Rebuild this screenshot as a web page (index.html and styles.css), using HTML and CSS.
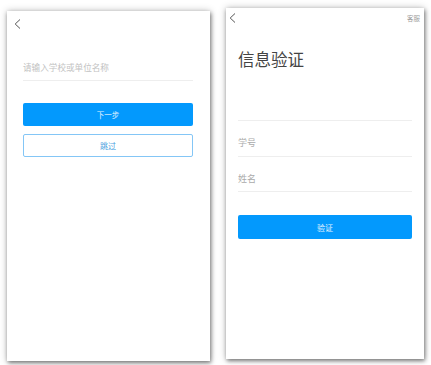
FILE: index.html
```html
<!DOCTYPE html>
<html lang="zh">
<head>
<meta charset="utf-8">
<link rel="stylesheet" href="styles.css">
</head>
<body>
<div class="stage">
  <div class="panel panel-left">
    <svg class="back back-left" viewBox="0 0 7 10" width="7" height="10"><path d="M6 0.5 L1.2 5 L6 9.5" fill="none" stroke="#555" stroke-width="1"/></svg>
    <div class="field-school">请输入学校或单位名称</div>
    <div class="btn btn-primary btn-next">下一步</div>
    <div class="btn btn-outline">跳过</div>
  </div>
  <div class="panel panel-right">
    <div class="header">
      <svg class="back" viewBox="0 0 7 10" width="7" height="10"><path d="M6 0.5 L1.2 5 L6 9.5" fill="none" stroke="#555" stroke-width="1"/></svg>
      <span class="service">客服</span>
    </div>
    <h1 class="title">信息验证</h1>
    <div class="blank"></div>
    <div class="field">学号</div>
    <div class="field field-name">姓名</div>
    <div class="btn btn-primary btn-verify">验证</div>
  </div>
</div>
</body>
</html>
```

FILE: styles.css
```css
* { box-sizing: border-box; }
html, body { margin: 0; padding: 0; background: #fff; }
body {
  width: 431px;
  height: 365px;
  overflow: hidden;
  font-family: "Noto Sans CJK SC", "Noto Sans", sans-serif;
}
.stage {
  display: flex;
  align-items: flex-start;
  padding-left: 7px;
}
.panel {
  background: #fff;
  box-shadow: 1px 2px 4px rgba(0, 0, 0, 0.45), 0 0 7px rgba(0, 0, 0, 0.25);
}
.panel-left {
  margin-top: 11px;
  width: 203px;
  height: 350px;
  padding: 0 17px 0 16px;
}
.panel-right {
  margin-top: 8px;
  margin-left: 16px;
  width: 198px;
  height: 351px;
  padding: 0 12px;
}
.back { display: block; }
.back-left {
  margin: 8px 0 0 -9px;
}
.field-school {
  margin-top: 25px;
  height: 27px;
  line-height: 26px;
  font-size: 8.6px;
  color: #c2c2c2;
  border-bottom: 1px solid #eeeeee;
}
.btn {
  height: 23px;
  display: flex;
  align-items: center;
  justify-content: center;
  border-radius: 2px;
}
.btn-primary {
  background: #0399fd;
  color: #e6f4ff;
  font-size: 7.5px;
}
.btn-next { margin-top: 22px; }
.btn-outline {
  margin-top: 8px;
  border: 1px solid #84c6f6;
  color: #4a9fe0;
  font-size: 8px;
}
.header {
  display: flex;
  align-items: center;
  justify-content: space-between;
  margin: 0 -8px 0 -9px;
  padding-top: 5px;
  height: 15px;
}
.service {
  font-size: 6.5px;
  color: #a0a0a0;
  line-height: 10px;
}
.title {
  margin: 24px 0 0 0;
  font-size: 16.5px;
  font-weight: normal;
  line-height: 24px;
  color: #444444;
}
.blank {
  height: 50px;
  border-bottom: 1px solid #eeeeee;
}
.field {
  height: 36px;
  padding-top: 12px;
  line-height: 20px;
  font-size: 9px;
  color: #aaaaaa;
  border-bottom: 1px solid #eeeeee;
}
.field-name { height: 35px; }
.btn-verify {
  margin-top: 23px;
  height: 24px;
  font-size: 8px;
}
```
